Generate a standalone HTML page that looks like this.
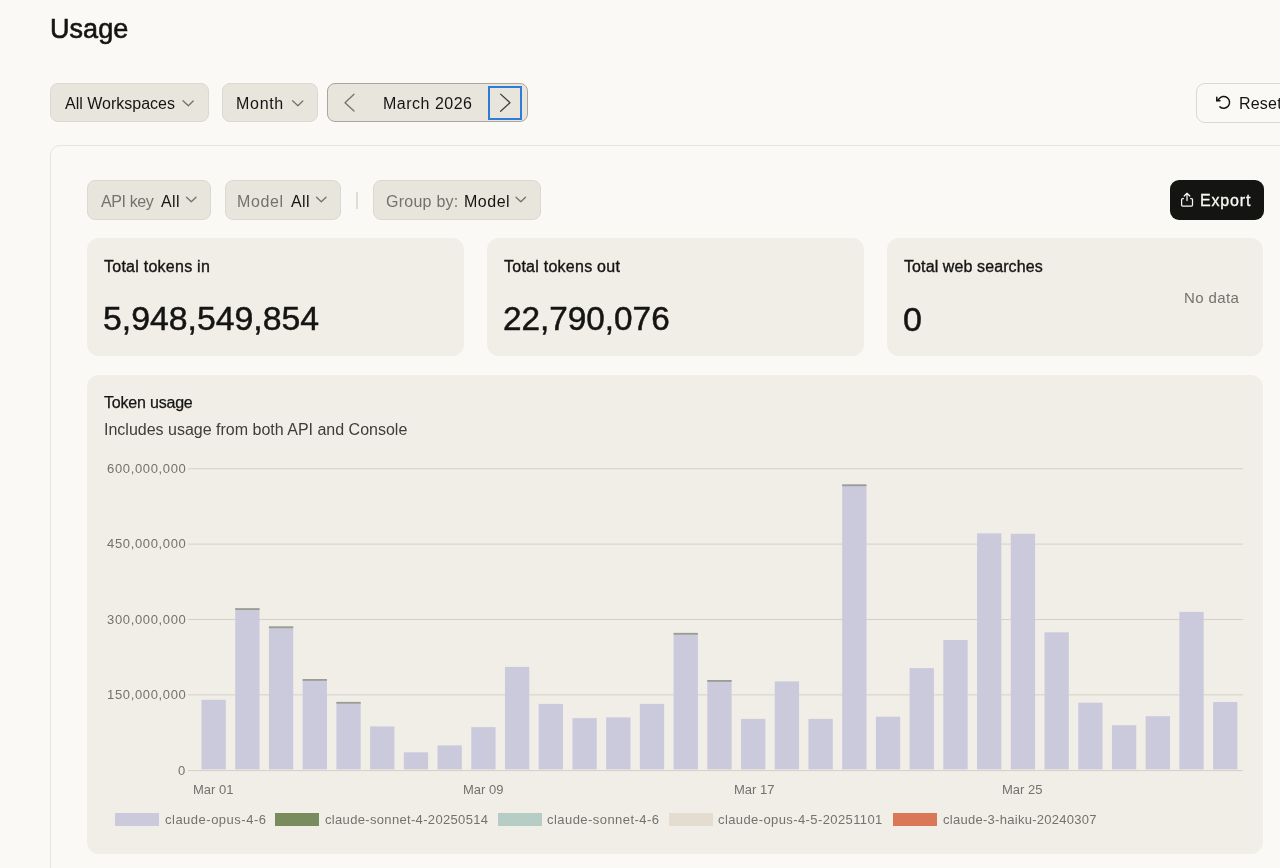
<!DOCTYPE html>
<html><head><meta charset="utf-8">
<style>
*{box-sizing:border-box;margin:0;padding:0}
html,body{width:1280px;height:868px;overflow:hidden;background:#faf9f5;font-family:"Liberation Sans",sans-serif;color:#141413}
.a{position:absolute}
.t{position:absolute;white-space:nowrap;line-height:1;will-change:transform}
.btn{position:absolute;background:#e8e6dc;border:1px solid #dad8d0;border-radius:8px}
.card{position:absolute;background:#f0eee6;border-radius:12px}
.med{-webkit-text-stroke:0.35px currentColor}
.g{color:#73726c}
svg{position:absolute;left:0;top:0;overflow:visible}
</style></head><body>
<div class="t med" style="left:49.5px;top:15.54px;font-size:27px;letter-spacing:0.05px;-webkit-text-stroke:0.6px #141413">Usage</div>

<!-- top controls -->
<div class="btn" style="left:50px;top:83px;width:159px;height:39px"></div>
<div class="t" style="left:64.5px;top:95.86px;font-size:16px">All Workspaces</div>
<div class="btn" style="left:222px;top:83px;width:96px;height:39px"></div>
<div class="t" style="left:235.5px;top:95.86px;font-size:16px;letter-spacing:0.7px">Month</div>
<div class="btn" style="left:327px;top:83px;width:201px;height:39px;border-color:#a9a59d;border-radius:8px"></div>
<div class="t" style="left:382.5px;top:95.86px;font-size:16px;letter-spacing:0.5px">March 2026</div>
<div class="a" style="left:488px;top:85.5px;width:34px;height:34px;border:2px solid #2f7bd6"></div>
<div class="a" style="left:1196px;top:82.5px;width:120px;height:40px;border:1px solid #dad8d0;border-radius:9px;background:#faf9f5"></div>
<div class="t" style="left:1238.5px;top:95.56px;font-size:16px;letter-spacing:0.2px">Reset</div>

<!-- outer card -->
<div class="a" style="left:50px;top:144.5px;width:1300px;height:800px;border:1px solid #e6e4dd;border-radius:10px;background:#faf9f5"></div>

<!-- filters -->
<div class="btn" style="left:86.5px;top:180px;width:124.5px;height:39.5px"></div>
<div class="t g" style="left:100.5px;top:193.66px;font-size:16px;letter-spacing:-0.4px">API key</div>
<div class="t" style="left:161px;top:193.66px;font-size:16px;letter-spacing:0.4px">All</div>
<div class="btn" style="left:224.5px;top:180px;width:116.5px;height:39.5px"></div>
<div class="t g" style="left:237px;top:193.66px;font-size:16px;letter-spacing:0.65px">Model</div>
<div class="t" style="left:291px;top:193.66px;font-size:16px;letter-spacing:0.4px">All</div>
<div class="a" style="left:356px;top:192px;width:2px;height:17px;background:#e0ddd6"></div>
<div class="btn" style="left:373px;top:180px;width:168px;height:39.5px"></div>
<div class="t g" style="left:385.5px;top:193.66px;font-size:16px;letter-spacing:0.25px">Group by:</div>
<div class="t" style="left:463.5px;top:193.66px;font-size:16px;letter-spacing:0.5px">Model</div>
<div class="a" style="left:1169.5px;top:180px;width:94.5px;height:40px;background:#141413;border-radius:9px"></div>
<div class="t med" style="left:1199.5px;top:192.86px;font-size:16px;letter-spacing:0.85px;color:#faf9f5;-webkit-text-stroke:0.3px #faf9f5">Export</div>

<!-- stat cards -->
<div class="card" style="left:86.5px;top:237.5px;width:377.5px;height:118px"></div>
<div class="card" style="left:486.5px;top:237.5px;width:377.5px;height:118px"></div>
<div class="card" style="left:886.5px;top:237.5px;width:376.5px;height:118px"></div>
<div class="t med" style="left:104px;top:259.26px;font-size:16px;letter-spacing:0.25px">Total tokens in</div>
<div class="t med" style="left:504px;top:259.26px;font-size:16px;letter-spacing:0.25px">Total tokens out</div>
<div class="t med" style="left:903.5px;top:259.26px;font-size:16px;letter-spacing:0.1px">Total web searches</div>
<div class="t" style="left:103px;top:301.82px;font-size:33.8px;-webkit-text-stroke:0.5px #141413">5,948,549,854</div>
<div class="t" style="left:503px;top:301.82px;font-size:33.3px;-webkit-text-stroke:0.5px #141413">22,790,076</div>
<div class="t" style="left:902.5px;top:301.82px;font-size:34px;-webkit-text-stroke:0.5px #141413">0</div>
<div class="t g" style="right:41px;top:289.80px;font-size:15px;letter-spacing:0.4px">No data</div>

<!-- chart card -->
<div class="card" style="left:86.5px;top:374.5px;width:1176.5px;height:479.5px;border-radius:12px"></div>
<div class="t" style="left:104px;top:395.36px;font-size:16px;letter-spacing:-0.2px;-webkit-text-stroke:0.25px #141413">Token usage</div>
<div class="t" style="left:104px;top:422.26px;font-size:16px;color:#3d3d3a">Includes usage from both API and Console</div>

<svg width="1280" height="868" viewBox="0 0 1280 868">
<g stroke="#d4d0c7" stroke-width="1">
<line x1="188" x2="1243" y1="468.75" y2="468.75"/>
<line x1="188" x2="1243" y1="544.1" y2="544.1"/>
<line x1="188" x2="1243" y1="619.5" y2="619.5"/>
<line x1="188" x2="1243" y1="694.9" y2="694.9"/>
</g>
<rect x="201.50" y="699.8" width="24.3" height="69.6" fill="#cbcadd"/>
<rect x="235.22" y="608.2" width="24.3" height="161.2" fill="#cbcadd"/>
<rect x="235.22" y="608.2" width="24.3" height="1.8" fill="#9c9d92"/>
<rect x="268.94" y="626.4" width="24.3" height="143.0" fill="#cbcadd"/>
<rect x="268.94" y="626.4" width="24.3" height="1.8" fill="#9c9d92"/>
<rect x="302.66" y="679.0" width="24.3" height="90.4" fill="#cbcadd"/>
<rect x="302.66" y="679.0" width="24.3" height="1.8" fill="#9c9d92"/>
<rect x="336.38" y="701.9" width="24.3" height="67.5" fill="#cbcadd"/>
<rect x="336.38" y="701.9" width="24.3" height="1.8" fill="#9c9d92"/>
<rect x="370.10" y="726.4" width="24.3" height="43.0" fill="#cbcadd"/>
<rect x="403.82" y="752.3" width="24.3" height="17.1" fill="#cbcadd"/>
<rect x="437.54" y="745.4" width="24.3" height="24.0" fill="#cbcadd"/>
<rect x="471.26" y="727.1" width="24.3" height="42.3" fill="#cbcadd"/>
<rect x="504.98" y="666.9" width="24.3" height="102.5" fill="#cbcadd"/>
<rect x="538.70" y="703.9" width="24.3" height="65.5" fill="#cbcadd"/>
<rect x="572.42" y="718.1" width="24.3" height="51.3" fill="#cbcadd"/>
<rect x="606.14" y="717.4" width="24.3" height="52.0" fill="#cbcadd"/>
<rect x="639.86" y="703.9" width="24.3" height="65.5" fill="#cbcadd"/>
<rect x="673.58" y="632.9" width="24.3" height="136.5" fill="#cbcadd"/>
<rect x="673.58" y="632.9" width="24.3" height="1.8" fill="#9c9d92"/>
<rect x="707.30" y="680.0" width="24.3" height="89.4" fill="#cbcadd"/>
<rect x="707.30" y="680.0" width="24.3" height="1.8" fill="#9c9d92"/>
<rect x="741.02" y="718.9" width="24.3" height="50.5" fill="#cbcadd"/>
<rect x="774.74" y="681.4" width="24.3" height="88.0" fill="#cbcadd"/>
<rect x="808.46" y="718.9" width="24.3" height="50.5" fill="#cbcadd"/>
<rect x="842.18" y="484.4" width="24.3" height="285.0" fill="#cbcadd"/>
<rect x="842.18" y="484.4" width="24.3" height="1.8" fill="#9c9d92"/>
<rect x="875.90" y="716.7" width="24.3" height="52.7" fill="#cbcadd"/>
<rect x="909.62" y="668.1" width="24.3" height="101.3" fill="#cbcadd"/>
<rect x="943.34" y="640.0" width="24.3" height="129.4" fill="#cbcadd"/>
<rect x="977.06" y="533.3" width="24.3" height="236.1" fill="#cbcadd"/>
<rect x="1010.78" y="533.8" width="24.3" height="235.6" fill="#cbcadd"/>
<rect x="1044.50" y="632.3" width="24.3" height="137.1" fill="#cbcadd"/>
<rect x="1078.22" y="702.7" width="24.3" height="66.7" fill="#cbcadd"/>
<rect x="1111.94" y="725.2" width="24.3" height="44.2" fill="#cbcadd"/>
<rect x="1145.66" y="716.2" width="24.3" height="53.2" fill="#cbcadd"/>
<rect x="1179.38" y="611.9" width="24.3" height="157.5" fill="#cbcadd"/>
<rect x="1213.10" y="702.0" width="24.3" height="67.4" fill="#cbcadd"/>
<line x1="188" x2="1243" y1="770.6" y2="770.6" stroke="#d4d0c7" stroke-width="1"/>
<!-- chevrons -->
<g fill="none" stroke="#73726c" stroke-width="1.3" stroke-linecap="round" stroke-linejoin="round">
<path d="M183 100.8 L188.3 105.8 L193.2 101"/>
<path d="M292.6 100.8 L297.9 105.8 L302.8 101"/>
<path d="M186.5 197.2 L191.3 201.8 L196 197.2"/>
<path d="M316.5 197.2 L321.3 201.8 L326 197.2"/>
<path d="M516 197.2 L520.8 201.8 L525.5 197.2"/>
<path d="M354 94.2 L345 102.7 L354 111.1"/>
</g>
<g fill="none" stroke="#3d3d3a" stroke-width="1.25" stroke-linecap="round" stroke-linejoin="round">
<path d="M500.6 94.1 L510 102.7 L500.6 111.3"/>
</g>
<!-- reset icon -->
<g fill="none" stroke="#141413" stroke-width="1.5" stroke-linecap="round" stroke-linejoin="round">
<path d="M1216.9 100.5 L1218.91 98.99 A5.85 5.85 0 1 1 1219.94 106.83"/>
<path d="M1216.8 97.3 L1216.8 100.7 L1220 100.7" stroke-linejoin="miter"/>
</g>
<!-- export icon -->
<g fill="none" stroke="#faf9f5" stroke-width="1.25" stroke-linecap="round" stroke-linejoin="round">
<path d="M1183.5 198.6 L1182.6 198.6 Q1181.6 198.6 1181.6 199.6 L1181.6 205 Q1181.6 206 1182.6 206 L1191.5 206 Q1192.5 206 1192.5 205 L1192.5 199.6 Q1192.5 198.6 1191.5 198.6 L1190.7 198.6"/>
<path d="M1187 200.6 L1187 193.6 M1184.2 196 L1187 193.3 L1189.8 196"/>
</g>
</svg>

<!-- y labels -->
<div class="t g" style="right:1094px;top:461.50px;font-size:13px;letter-spacing:0.65px">600,000,000</div>
<div class="t g" style="right:1094px;top:537.00px;font-size:13px;letter-spacing:0.65px">450,000,000</div>
<div class="t g" style="right:1094px;top:612.50px;font-size:13px;letter-spacing:0.65px">300,000,000</div>
<div class="t g" style="right:1094px;top:688.00px;font-size:13px;letter-spacing:0.65px">150,000,000</div>
<div class="t g" style="right:1094px;top:763.50px;font-size:13px;letter-spacing:0.65px">0</div>
<!-- x labels -->
<div class="t g" style="left:193px;top:783.00px;font-size:13px">Mar 01</div>
<div class="t g" style="left:462.5px;top:783.00px;font-size:13px">Mar 09</div>
<div class="t g" style="left:733.5px;top:783.00px;font-size:13px">Mar 17</div>
<div class="t g" style="left:1002px;top:783.00px;font-size:13px">Mar 25</div>
<!-- legend -->
<div class="a" style="left:115px;top:812.7px;width:44px;height:13px;background:#cbcadd"></div>
<div class="t g" style="left:164.5px;top:812.90px;font-size:13px;letter-spacing:0.5px">claude-opus-4-6</div>
<div class="a" style="left:275px;top:812.7px;width:44px;height:13px;background:#788c5d"></div>
<div class="t g" style="left:324.5px;top:812.90px;font-size:13px;letter-spacing:0.33px">claude-sonnet-4-20250514</div>
<div class="a" style="left:498px;top:812.7px;width:44px;height:13px;background:#b5cdc5"></div>
<div class="t g" style="left:547px;top:812.90px;font-size:13px;letter-spacing:0.45px">claude-sonnet-4-6</div>
<div class="a" style="left:669px;top:812.7px;width:44px;height:13px;background:#e3dccf"></div>
<div class="t g" style="left:718px;top:812.90px;font-size:13px;letter-spacing:0.4px">claude-opus-4-5-20251101</div>
<div class="a" style="left:893px;top:812.7px;width:44px;height:13px;background:#d97757"></div>
<div class="t g" style="left:942.5px;top:812.90px;font-size:13px;letter-spacing:0.28px">claude-3-haiku-20240307</div>
</body></html>
